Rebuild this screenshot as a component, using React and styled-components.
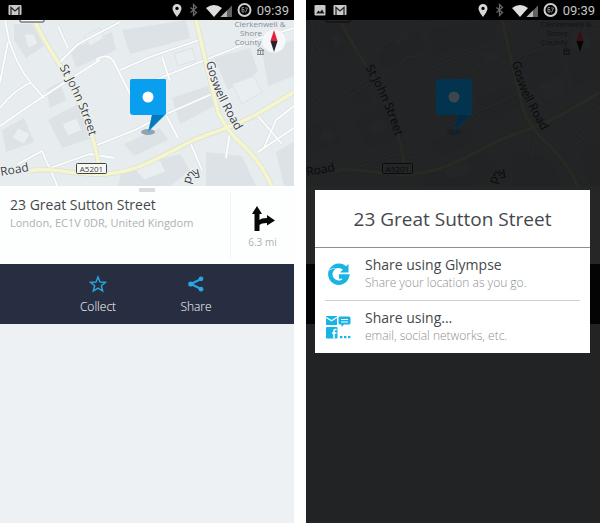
import React from 'react';
import styled, { createGlobalStyle, ThemeProvider, useTheme } from 'styled-components';

const day = {
    page: '#edf1f4',
    land: '#e7ecef',
    block: '#dde2e7',
    blockLight: '#e9eef1',
    road: '#fdfefe',
    roadEdge: '#dce1e5',
    mainRoad: '#f5f6cd',
    mainEdge: '#dbe0d2',
    label: '#3e4246',
    poi: '#858d94',
    halo: '#eef2f4',
    shield: '#f7f8f4',
    pin: '#0a9fee',
    pinFold: '#0779b8',
    pinDot: '#ffffff',
    pinShadow: '#8fa4b0',
    compass: '#f5f7f8',
    north: '#e8203c',
    south: '#222528',
    card: '#fdfefe',
    handle: '#d9dddf',
    bar: '#272e42'
};

const dimmed = {
    page: '#222324',
    land: '#222425',
    block: '#212324',
    blockLight: '#232526',
    road: '#252728',
    roadEdge: '#212324',
    mainRoad: '#282925',
    mainEdge: '#232422',
    label: '#0a0b0c',
    poi: '#121314',
    halo: '#222425',
    shield: '#242526',
    pin: '#023450',
    pinFold: '#022b43',
    pinDot: '#3b474d',
    pinShadow: '#172026',
    compass: '#232526',
    north: '#3a0e15',
    south: '#060606',
    card: '#252626',
    handle: '#222323',
    bar: '#030406'
};

const MAIN_ROADS = [
    'M34 0 C44 22 60 44 66 56 C80 84 96 116 99 149',
    'M28 151 C50 147 66 153 90 154 C130 156 150 142 190 122 C215 110 235 108 262 91 C275 84 286 77 294 72',
    'M196 0 C204 34 210 60 218 92 C224 106 232 116 244 126 C258 140 268 156 273 170'
];

const SIDE_ROADS = [
    'M5 0 L9 20 Q18 48 31 63 L44 78',
    'M8 22 L0 62',
    'M0 88 Q14 70 30 63',
    'M0 106 Q20 92 44 76 L78 54 L100 40',
    'M60 42 L78 24 L120 2',
    'M58 6 L68 28',
    'M96 40 Q108 32 114 42 L120 54 L132 78',
    'M120 50 L150 37 L202 19',
    'M18 144 L42 131 L60 172',
    'M50 148 L90 134 L114 138',
    'M97 125 L135 110 L164 95 L212 74',
    'M162 37 L170 61',
    'M145 64 L200 42 L260 18 L294 8',
    'M166 95 L178 118',
    'M190 122 L202 150',
    'M231 106 L226 138',
    'M257 95 L282 124',
    'M258 132 L294 108',
    'M264 128 L276 100 L294 86'
];

const BLOCKS = [
    'M14 4 L32 4 L44 26 L26 38 L14 20Z',
    'M70 30 L112 12 L116 30 L76 48Z',
    'M2 110 L24 98 L34 122 L6 132Z',
    'M48 100 L78 84 L92 118 L62 128Z',
    'M122 10 L186 0 L190 18 L130 34Z',
    'M124 124 L160 108 L168 120 L134 136Z',
    'M172 78 L208 66 L214 86 L180 104Z',
    'M206 132 L242 136 L256 166 L206 166Z',
    'M214 38 L250 28 L258 52 L228 70Z',
    'M262 30 L294 20 L294 56 L268 66Z',
    'M122 150 L180 134 L190 150 L170 166 L118 166Z',
    'M276 132 L294 122 L294 166 L284 166Z',
    'M50 88 L66 80 L60 62 L46 70Z'
];

const YARDS = [
    'M24 14 L34 14 L38 24 L28 28Z',
    'M174 34 L192 28 L196 40 L178 46Z',
    'M232 64 L254 56 L262 72 L242 84Z',
    'M84 16 L100 8 L104 18 L90 26Z',
    'M62 104 L76 98 L82 110 L68 116Z',
    'M134 148 L160 140 L166 152 L144 160Z',
    'M18 108 L30 114 L24 124 L12 118Z'
];

const CityMap = ({ id }) => {
    const c = useTheme();
    return (
        <MapSvg viewBox="0 0 294 166" role="img" aria-label="Street map">
            <rect width="294" height="166" fill={c.land} />
            {BLOCKS.map((d) => <path key={d} d={d} fill={c.block} />)}
            {YARDS.map((d) => <path key={d} d={d} fill={c.blockLight} stroke={c.block} />)}
            <g fill="none" strokeLinejoin="round">
                {SIDE_ROADS.map((d) => <path key={d} d={d} stroke={c.roadEdge} strokeWidth="3.2" />)}
                {SIDE_ROADS.map((d) => <path key={d} d={d} stroke={c.road} strokeWidth="1.8" />)}
                {MAIN_ROADS.map((d) => <path key={d} d={d} stroke={c.mainEdge} strokeWidth="5" />)}
                {MAIN_ROADS.map((d) => <path key={d} d={d} stroke={c.mainRoad} strokeWidth="3.6" />)}
            </g>

            <path id={`${id}-john`} d="M59 47 Q72 70 78 85 Q86 104 92 126" fill="none" />
            <path id={`${id}-goswell`} d="M206 42 Q211 64 219 80 Q226 94 240 118" fill="none" />
            <path id={`${id}-rudi`} d="M199 149 Q184 150 184 166 V180" fill="none" />
            <RoadName><textPath href={`#${id}-john`}>St John Street</textPath></RoadName>
            <RoadName><textPath href={`#${id}-goswell`}>Goswell Road</textPath></RoadName>
            <RoadName><textPath href={`#${id}-rudi`}>Rud</textPath></RoadName>
            <RoadName transform="translate(1 156) rotate(-10)">Road</RoadName>

            <rect x="20" y="-8" width="24" height="10" rx="1" fill={c.shield} stroke={c.label} />
            <rect x="76.5" y="143.5" width="30" height="10" rx="1" fill={c.shield} stroke={c.label} />
            <ShieldText x="91.5" y="152">A5201</ShieldText>

            <PoiText x="260" y="7">Clerkenwell &amp;</PoiText>
            <PoiText x="251" y="16">Shore</PoiText>
            <PoiText x="248" y="25">County</PoiText>
            <path d="M257 30.5 L260.5 28 L264 30.5Z M258 31 V34 M260.5 31 V34 M263 31 V34 M257 34.5 H264" stroke={c.poi} fill="none" />

            <circle cx="274" cy="21" r="11.5" fill={c.compass} />
            <path d="M274 10 L277.5 21 H270.5Z" fill={c.north} />
            <path d="M274 32 L277.5 21 H270.5Z" fill={c.south} />

            <ellipse cx="148" cy="112" rx="7" ry="3" fill={c.pinShadow} />
            <path d="M132 59 H165 Q166 59 166 60 V94 L148 112 L152 95 H133 Q130 95 130 92 V61 Q130 59 132 59Z" fill={c.pin} />
            <path d="M152 95 H164 L149 110Z" fill={c.pinFold} />
            <circle cx="148" cy="77" r="5.5" fill={c.pinDot} />
        </MapSvg>
    );
};

const MailIcon = () => (
    <svg width="14" height="12" viewBox="0 0 14 12" aria-hidden="true">
        <rect x="0.5" y="1" width="13" height="10" rx="1" fill="#c9c9c9" />
        <path d="M3 11 V3.5 L7 7 L11 3.5 V11" fill="none" stroke="#2a2a2a" strokeWidth="1.3" />
    </svg>
);

const PhotoIcon = () => (
    <svg width="12" height="12" viewBox="0 0 12 12" aria-hidden="true">
        <rect x="0.5" y="1" width="11" height="10.5" rx="1" fill="#c9c9c9" />
        <path d="M2 9.5 L4.5 6.5 L6 8 L8 5.5 L10.5 9.5Z" fill="#1a1a1a" />
    </svg>
);

const SignalIcons = () => (
    <svg width="60" height="16" viewBox="0 0 60 16" aria-hidden="true">
        <path d="M5 2 A4.5 4.5 0 0 1 9.5 6.5 C9.5 9.5 5 15 5 15 C5 15 0.5 9.5 0.5 6.5 A4.5 4.5 0 0 1 5 2Z M5 4.7 A1.7 1.7 0 1 0 5 8.1 A1.7 1.7 0 1 0 5 4.7Z" fill="#d6d6d6" fillRule="evenodd" />
        <path d="M18.5 5.5 L24.5 10.5 L21.5 13.5 V2.5 L24.5 5.5 L18.5 10.5" fill="none" stroke="#696969" strokeWidth="1.3" />
        <path d="M34 6 Q42 0 50 6 L42 15Z" fill="#dedede" />
        <path d="M60 3.5 V15 H48.5Z" fill="#626262" />
        <path d="M55 8.5 V15 H48.5Z" fill="#b8b8b8" />
    </svg>
);

const BatteryIcon = () => (
    <svg width="15" height="16" viewBox="0 0 15 16" aria-hidden="true">
        <circle cx="7.5" cy="8" r="6" fill="none" stroke="#cecece" strokeWidth="2" />
        <path d="M7 5.5 H5 V10 H7 V7.5 H5 M8 6 H10.5 L8.5 10.5" fill="none" stroke="#858585" />
    </svg>
);

const DirectionsIcon = () => (
    <svg width="26" height="28" viewBox="0 0 26 28" aria-hidden="true">
        <path d="M7 1 L12 9 H9.5 V15 Q11 13 17 13 V10 L25 15.5 L17 20.5 V18 Q11 18 9.5 20 V26 H4.5 V9 H2Z" fill="#070809" />
    </svg>
);

const StarIcon = () => (
    <svg width="18" height="18" viewBox="0 0 18 18" aria-hidden="true">
        <path d="M9 2 L11 7 L16.5 7.3 L12.3 10.8 L13.7 16 L9 13.1 L4.3 16 L5.7 10.8 L1.5 7.3 L7 7Z" fill="none" stroke="#2aa6e0" strokeWidth="1.4" />
    </svg>
);

const ShareIcon = () => (
    <svg width="18" height="18" viewBox="0 0 18 18" aria-hidden="true">
        <path d="M14 4 L4 9 L14 14" fill="none" stroke="#2aa6e0" strokeWidth="2" />
        <circle cx="14" cy="3.8" r="2.4" fill="#2aa6e0" />
        <circle cx="3.8" cy="9" r="2.6" fill="#2aa6e0" />
        <circle cx="14" cy="14.2" r="2.4" fill="#2aa6e0" />
    </svg>
);

const GlympseIcon = () => (
    <svg width="26" height="26" viewBox="0 0 26 26" aria-hidden="true">
        <path d="M20.5 8 A8.5 8.5 0 1 0 22 15.5 H14" fill="none" stroke="#18b4e4" strokeWidth="4.4" />
        <path d="M23.5 3 V11.5 H15Z" fill="#18b4e4" />
        <path d="M4 9 Q8 6 14 8.5" fill="none" stroke="#fff" strokeWidth="0.6" />
    </svg>
);

const AppsIcon = () => (
    <svg width="26" height="26" viewBox="0 0 26 26" aria-hidden="true">
        <g fill="#18b4e4">
            <path d="M1 4 L6.5 7.5 L12 4 V11 H1Z" />
            <path d="M1 2 H12 V2.8 L6.5 6 L1 2.8Z" />
            <path d="M15 2.5 H24 Q25.5 2.5 25.5 4 V9 Q25.5 10.5 24 10.5 H19 L16.5 13 V10.5 H15 Q13.5 10.5 13.5 9 V4 Q13.5 2.5 15 2.5Z" />
            <rect x="1" y="13" width="11.5" height="11.5" rx="1" />
            <rect x="15" y="22" width="2.4" height="2.2" />
            <rect x="19" y="22" width="2.4" height="2.2" />
            <rect x="23" y="22" width="2.4" height="2.2" />
        </g>
        <path d="M16 5.5 H23 M16 8 H23" stroke="#fff" />
        <path d="M11.5 15.5 H10.5 Q9 15.5 9 17 V24.5 M7 19 H11.5" fill="none" stroke="#fff" strokeWidth="1.6" />
    </svg>
);

const StatusBar = ({ photo }) => (
    <Status>
        <Notices>
            {photo && <PhotoIcon />}
            <MailIcon />
        </Notices>
        <SignalIcons />
        <BatteryIcon />
        <Clock>09:39</Clock>
    </Status>
);

const PlaceScreen = () => (
    <ThemeProvider theme={day}>
        <Phone>
            <StatusBar />
            <CityMap id="place" />
            <PlaceCard>
                <Handle />
                <PlaceText>
                    <PlaceName>23 Great Sutton Street</PlaceName>
                    <Address>London, EC1V 0DR, United Kingdom</Address>
                </PlaceText>
                <Directions type="button">
                    <DirectionsIcon />
                    6.3 mi
                </Directions>
            </PlaceCard>
            <ActionBar>
                <Action type="button"><StarIcon />Collect</Action>
                <Action type="button"><ShareIcon />Share</Action>
            </ActionBar>
        </Phone>
    </ThemeProvider>
);

const ShareScreen = () => (
    <ThemeProvider theme={dimmed}>
        <Phone>
            <StatusBar photo />
            <CityMap id="share" />
            <PlaceCard />
            <ActionBar />
            <Dialog role="dialog" aria-labelledby="share-title">
                <DialogTitle id="share-title">23 Great Sutton Street</DialogTitle>
                <Options>
                    <Option type="button">
                        <GlympseIcon />
                        <OptionText>
                            <OptionName>Share using Glympse</OptionName>
                            <OptionHint>Share your location as you go.</OptionHint>
                        </OptionText>
                    </Option>
                    <Option type="button">
                        <AppsIcon />
                        <OptionText>
                            <OptionName>Share using...</OptionName>
                            <OptionHint>email, social networks, etc.</OptionHint>
                        </OptionText>
                    </Option>
                </Options>
            </Dialog>
        </Phone>
    </ThemeProvider>
);

const App = () => (
    <>
        <GlobalStyle />
        <Page>
            <PlaceScreen />
            <ShareScreen />
        </Page>
    </>
);

const GlobalStyle = createGlobalStyle`
    * {
        box-sizing: border-box;
    }

    body {
        margin: 0;
        background: #fff;
        font-family: "Open Sans", "Noto Sans", sans-serif;
    }

    button {
        border: 0;
        padding: 0;
        background: none;
        font: inherit;
        color: inherit;
        cursor: pointer;
    }
`;

const Page = styled.main`
    display: grid;
    grid-template-columns: 1fr 1fr;
    gap: 12px;
    min-height: 100vh;
`;

const Phone = styled.section`
    position: relative;
    display: flex;
    flex-direction: column;
    background: ${({ theme }) => theme.page};
`;

const Status = styled.header`
    display: flex;
    align-items: center;
    gap: 5px;
    height: 20px;
    padding: 0 5px 0 8px;
    background: #000;
`;

const Notices = styled.div`
    display: flex;
    flex: 1;
    gap: 7px;
`;

const Clock = styled.time`
    font-family: Roboto, sans-serif;
    font-size: 13px;
    color: #c4c4c4;
`;

const MapSvg = styled.svg`
    display: block;
    width: 100%;
`;

const RoadName = styled.text`
    font-size: 12px;
    fill: ${({ theme }) => theme.label};
    stroke: ${({ theme }) => theme.halo};
    stroke-width: 2px;
    paint-order: stroke;
`;

const ShieldText = styled.text`
    font-size: 8px;
    text-anchor: middle;
    fill: ${({ theme }) => theme.label};
`;

const PoiText = styled.text`
    font-size: 8px;
    text-anchor: middle;
    fill: ${({ theme }) => theme.poi};
`;

const PlaceCard = styled.div`
    position: relative;
    display: flex;
    height: 78px;
    background: ${({ theme }) => theme.card};
`;

const Handle = styled.div`
    position: absolute;
    top: 2px;
    left: 50%;
    width: 16px;
    height: 4px;
    margin-left: -8px;
    background: ${({ theme }) => theme.handle};
`;

const PlaceText = styled.div`
    flex: 1;
    padding: 10px 0 0 10px;
`;

const PlaceName = styled.h1`
    margin: 0;
    font-size: 14px;
    font-weight: 400;
    line-height: 18px;
    color: #45484b;
`;

const Address = styled.p`
    margin: 0;
    font-size: 11px;
    line-height: 18px;
    color: #adb1b4;
`;

const Directions = styled.button`
    display: flex;
    flex-direction: column;
    align-items: center;
    width: 64px;
    margin: 6px 0;
    padding-top: 13px;
    border-left: 1px solid #f1f3f4;
    font-size: 10px;
    line-height: 18px;
    color: #adb1b4;
`;

const ActionBar = styled.nav`
    display: flex;
    justify-content: center;
    height: 60px;
    background: ${({ theme }) => theme.bar};
`;

const Action = styled.button`
    display: flex;
    flex-direction: column;
    align-items: center;
    gap: 6px;
    width: 98px;
    padding-top: 11px;
    font-size: 12px;
    font-weight: 300;
    line-height: 16px;
    color: #ffffff;
`;

const Dialog = styled.div`
    position: absolute;
    top: 190px;
    left: 9px;
    right: 10px;
    background: #fff;
`;

const DialogTitle = styled.h2`
    margin: 0;
    padding: 16px 0 15px;
    border-bottom: 1px solid #8e9092;
    font-size: 19px;
    font-weight: 400;
    line-height: 26px;
    text-align: center;
    color: #45484b;
`;

const Options = styled.div`
    padding: 0 10px 1px;
`;

const Option = styled.button`
    display: flex;
    align-items: center;
    gap: 14px;
    width: 100%;
    height: 52px;
    text-align: left;

    & + & {
        border-top: 1px solid #cfd2d3;
    }
`;

const OptionText = styled.span`
    display: flex;
    flex-direction: column;
`;

const OptionName = styled.span`
    font-size: 14px;
    line-height: 18px;
    color: #45484b;
`;

const OptionHint = styled.span`
    font-size: 12px;
    font-weight: 300;
    line-height: 18px;
    color: #8b8f92;
`;

export default App;
